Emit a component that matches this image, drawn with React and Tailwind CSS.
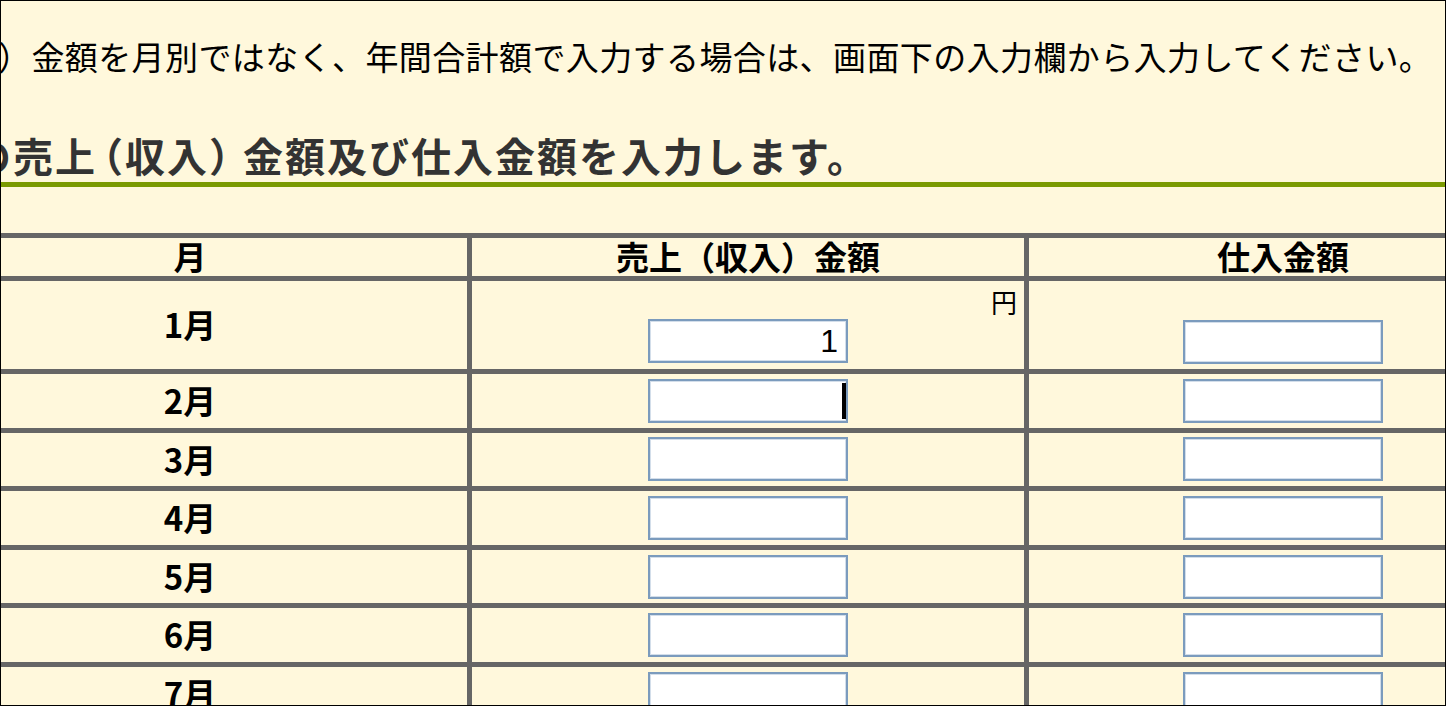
import { useState } from 'react';

const months = ['1月', '2月', '3月', '4月', '5月', '6月', '7月', '8月', '9月', '10月', '11月', '12月'];

function AmountInput({ value, onChange, caret }) {
  return (
    <div className="relative w-[200px] h-[44px] shrink-0">
      <input
        type="text"
        value={value}
        onChange={onChange}
        className="w-full h-full bg-white border-[2px] border-[#7b9bbd] shadow-[inset_0_0_0_1px_#d3deea] text-right pr-[8px] text-[32px] leading-none text-black outline-none font-['Liberation_Sans',sans-serif]"
      />
      {caret && <span className="absolute right-[2px] top-[4px] w-[4px] h-[36px] bg-black" />}
    </div>
  );
}

export default function App() {
  const [sales, setSales] = useState(() => months.map((m, i) => (i === 0 ? '1' : '')));
  const [purchases, setPurchases] = useState(() => months.map(() => ''));

  const updateSales = (i, v) => setSales(prev => prev.map((x, j) => (j === i ? v : x)));
  const updatePurchases = (i, v) => setPurchases(prev => prev.map((x, j) => (j === i ? v : x)));

  return (
    <div className="w-[1446px] h-[706px] overflow-hidden border border-black bg-[#fff8dc] text-black font-['Noto_Sans_CJK_JP',sans-serif]">
      <p className="ml-[-170px] pt-[32px] text-[33px] tracking-[0.4px] leading-[46px] whitespace-nowrap">
        売上（収入）金額を月別ではなく、年間合計額で入力する場合は、画面下の入力欄から入力してください。
      </p>

      <h2 className="ml-[-114px] mt-[53px] pb-[4px] text-[40px] tracking-[2px] leading-[46px] font-bold text-[#333333] whitespace-nowrap border-b-[5px] border-[#7a9a01]">
        月別の売上<span className="ml-[-14px]">（</span>収入<span className="mr-[-8px]">）</span>金額及び仕入金額を入力します。
      </h2>

      <div className="ml-[-93px] mt-[46px] w-[1634px] border-t-[5px] border-l-[5px] border-r-[5px] border-[#666666]">
        <div className="flex h-[43px] border-b-[5px] border-[#666666] text-[33px] font-bold">
          <div className="w-[554px] shrink-0 flex items-center justify-center">月</div>
          <div className="w-[557px] shrink-0 border-l-[5px] border-[#666666] flex items-center justify-center">売上（収入）金額</div>
          <div className="w-[513px] shrink-0 border-l-[5px] border-[#666666] flex items-center justify-center">仕入金額</div>
        </div>

        {months.map((m, i) => (
          <div
            key={m}
            className={`flex border-b-[5px] border-[#666666] ${i === 0 ? 'h-[93px]' : 'h-[58.6px]'}`}
          >
            <div className="w-[554px] shrink-0 flex items-center justify-center text-[33px] font-bold">{m}</div>
            <div className="w-[557px] shrink-0 border-l-[5px] border-[#666666] flex flex-col items-center justify-center">
              {i === 0 && (
                <div className="self-stretch pr-[7px] h-[30px] mb-[2px] text-right text-[26px] leading-[30px]">円</div>
              )}
              <AmountInput value={sales[i]} onChange={e => updateSales(i, e.target.value)} caret={i === 1} />
            </div>
            <div className="w-[513px] shrink-0 border-l-[5px] border-[#666666] flex flex-col items-center justify-end pb-[4.8px]">
              <AmountInput value={purchases[i]} onChange={e => updatePurchases(i, e.target.value)} />
            </div>
          </div>
        ))}
      </div>
    </div>
  );
}
